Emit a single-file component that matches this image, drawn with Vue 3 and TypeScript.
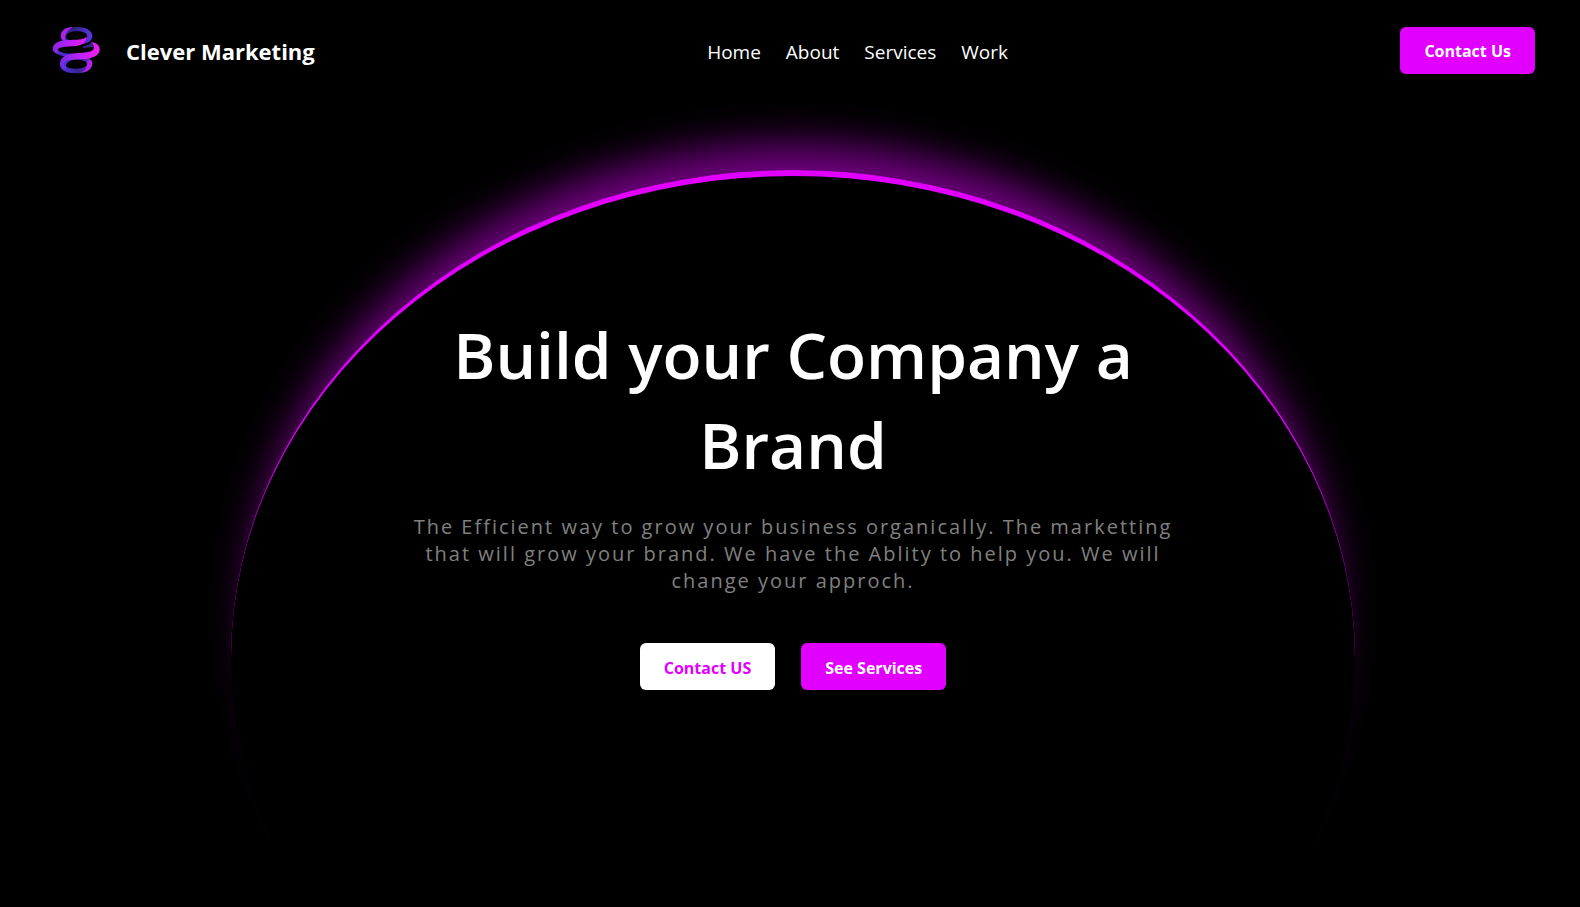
<script setup lang="ts">
interface NavLink {
  label: string
  href: string
}

const links: NavLink[] = [
  { label: 'Home', href: '#home' },
  { label: 'About', href: '#about' },
  { label: 'Services', href: '#services' },
  { label: 'Work', href: '#work' },
]
</script>

<template>
  <div class="page">
    <header class="header">
      <a class="brand" href="#home">
        <svg class="logo" viewBox="0 0 240 210" aria-hidden="true">
          <defs>
            <linearGradient id="band-upper" x1="0" x2="1">
              <stop offset="0" stop-color="#8a25e0" />
              <stop offset="0.4" stop-color="#ac21f8" />
              <stop offset="1" stop-color="#f01cf0" />
            </linearGradient>
            <linearGradient id="band-lower" x1="0" x2="1">
              <stop offset="0" stop-color="#6f2be8" />
              <stop offset="0.45" stop-color="#b822f8" />
              <stop offset="1" stop-color="#f81cf0" />
            </linearGradient>
            <linearGradient id="ring-top" x1="0" x2="1">
              <stop offset="0" stop-color="#5a2ad8" />
              <stop offset="0.4" stop-color="#2f2180" />
              <stop offset="1" stop-color="#5f35ea" />
            </linearGradient>
            <linearGradient id="ring-bottom" x1="0" x2="1">
              <stop offset="0" stop-color="#5a34ea" />
              <stop offset="0.55" stop-color="#33248f" />
              <stop offset="1" stop-color="#6a28c8" />
            </linearGradient>
          </defs>
          <path
            fill="url(#ring-top)"
            fill-rule="evenodd"
            d="M62 62C62 44 82 36 109 36C138 36 157 46 157 64C157 76 146 84 128 88L72 82C65 76 62 70 62 62ZM78 66C80 76 94 78 109 76C126 75 141 72 141 62C141 54 128 49 109 49C90 49 78 56 78 66Z"
          />
          <path fill="#b321e4" d="M64 56C68 42 82 36 98 36C86 42 80 50 76 60C74 68 74 76 78 80C66 76 60 66 64 56Z" />
          <path fill="#35267f" d="M130 94C142 92 150 88 154 82C168 84 179 92 178 104C174 97 160 95 128 99Z" />
          <path fill="#4a2bc9" d="M38 101C40 112 52 120 74 124C82 120 94 119 110 117C78 118 54 112 52 100Z" />
          <path
            fill="url(#ring-bottom)"
            fill-rule="evenodd"
            d="M60 148C62 128 82 120 112 120C140 118 157 132 157 146C156 166 136 175 108 175C78 175 60 166 60 148ZM78 153C80 158 92 161 108 161C126 161 140 156 141 148C141 139 128 134 110 134C92 134 78 142 78 153Z"
          />
          <path fill="#b521e6" d="M124 173C136 166 142 156 142 143C142 137 146 133 156 139C160 156 148 170 124 173Z" />
          <path fill="url(#band-upper)" d="M38 103C38 84 56 76 84 75C108 74 130 76 138 66C140 82 126 92 102 94C78 95 58 95 52 105C51 109 53 113 58 117C46 115 38 110 38 103Z" />
          <path fill="url(#band-lower)" d="M61 150C57 130 74 118 104 115C134 113 160 112 162 99C163 92 159 87 154 82C170 84 180 92 179 105C178 124 154 131 124 133C96 134 76 134 73 144C72 149 74 155 78 160C68 158 62 156 61 150Z" />
        </svg>
        <span class="name">Clever Marketing</span>
      </a>
      <nav class="nav" aria-label="Main">
        <a v-for="link in links" :key="link.label" :href="link.href">{{ link.label }}</a>
      </nav>
      <button class="btn btn-primary" type="button">Contact Us</button>
    </header>

    <main class="hero">
      <div class="arc" aria-hidden="true"></div>
      <h1>Build your Company a Brand</h1>
      <p>
        The Efficient way to grow your business organically. The marketting that will grow your
        brand. We have the Ablity to help you. We will change your approch.
      </p>
      <div class="actions">
        <button class="btn btn-light" type="button">Contact US</button>
        <button class="btn btn-primary" type="button">See Services</button>
      </div>
    </main>
  </div>
</template>

<style>
body {
  margin: 0;
  background: #000;
}
</style>

<style scoped>
.page {
  position: relative;
  min-height: 100vh;
  overflow: hidden;
  box-sizing: border-box;
  background: #000;
  color: #fff;
  font-family: 'Segoe UI', 'Open Sans', 'Noto Sans', sans-serif;
}

.header {
  display: flex;
  align-items: center;
  justify-content: space-between;
  padding: 15px 45px 15px 40px;
}

.brand {
  display: flex;
  align-items: center;
  gap: 6px;
  color: #fff;
  font-size: 22px;
  font-weight: 700;
  line-height: 30px;
  text-decoration: none;
}

.name {
  padding-top: 2px;
}

.logo {
  width: 80px;
  height: 70px;
}

.nav {
  display: flex;
  gap: 25px;
  padding-top: 3px;
}

.nav a {
  color: #fff;
  font-size: 19px;
  line-height: 30px;
  text-decoration: none;
}

.btn {
  height: 47px;
  padding: 2px 24px 0;
  border: 0;
  border-radius: 6px;
  font-family: inherit;
  font-size: 16px;
  font-weight: 700;
  cursor: pointer;
}

.btn-primary {
  background: #e100ff;
  color: #fff;
}

.btn-light {
  background: #fff;
  color: #e100ff;
}

.hero {
  position: relative;
  display: flex;
  flex-direction: column;
  align-items: center;
  padding: 210px 0 40px 6px;
  text-align: center;
}

.arc {
  position: absolute;
  top: 70px;
  left: calc(50% + 3px);
  width: 1124px;
  height: 976px;
  box-sizing: border-box;
  border-top: 6px solid #e100ff;
  border-radius: 50%;
  box-shadow: 0 -45px 40px -20px rgba(225, 0, 255, 0.5);
  transform: translateX(-50%);
}

h1 {
  position: relative;
  max-width: 780px;
  margin: 0;
  font-size: 64px;
  font-weight: 600;
  line-height: 90px;
}

p {
  position: relative;
  max-width: 780px;
  margin: 23px 0 0;
  color: #808080;
  font-size: 20px;
  line-height: 27px;
  letter-spacing: 2px;
}

.actions {
  position: relative;
  display: flex;
  gap: 26px;
  margin-top: 49px;
}
</style>
